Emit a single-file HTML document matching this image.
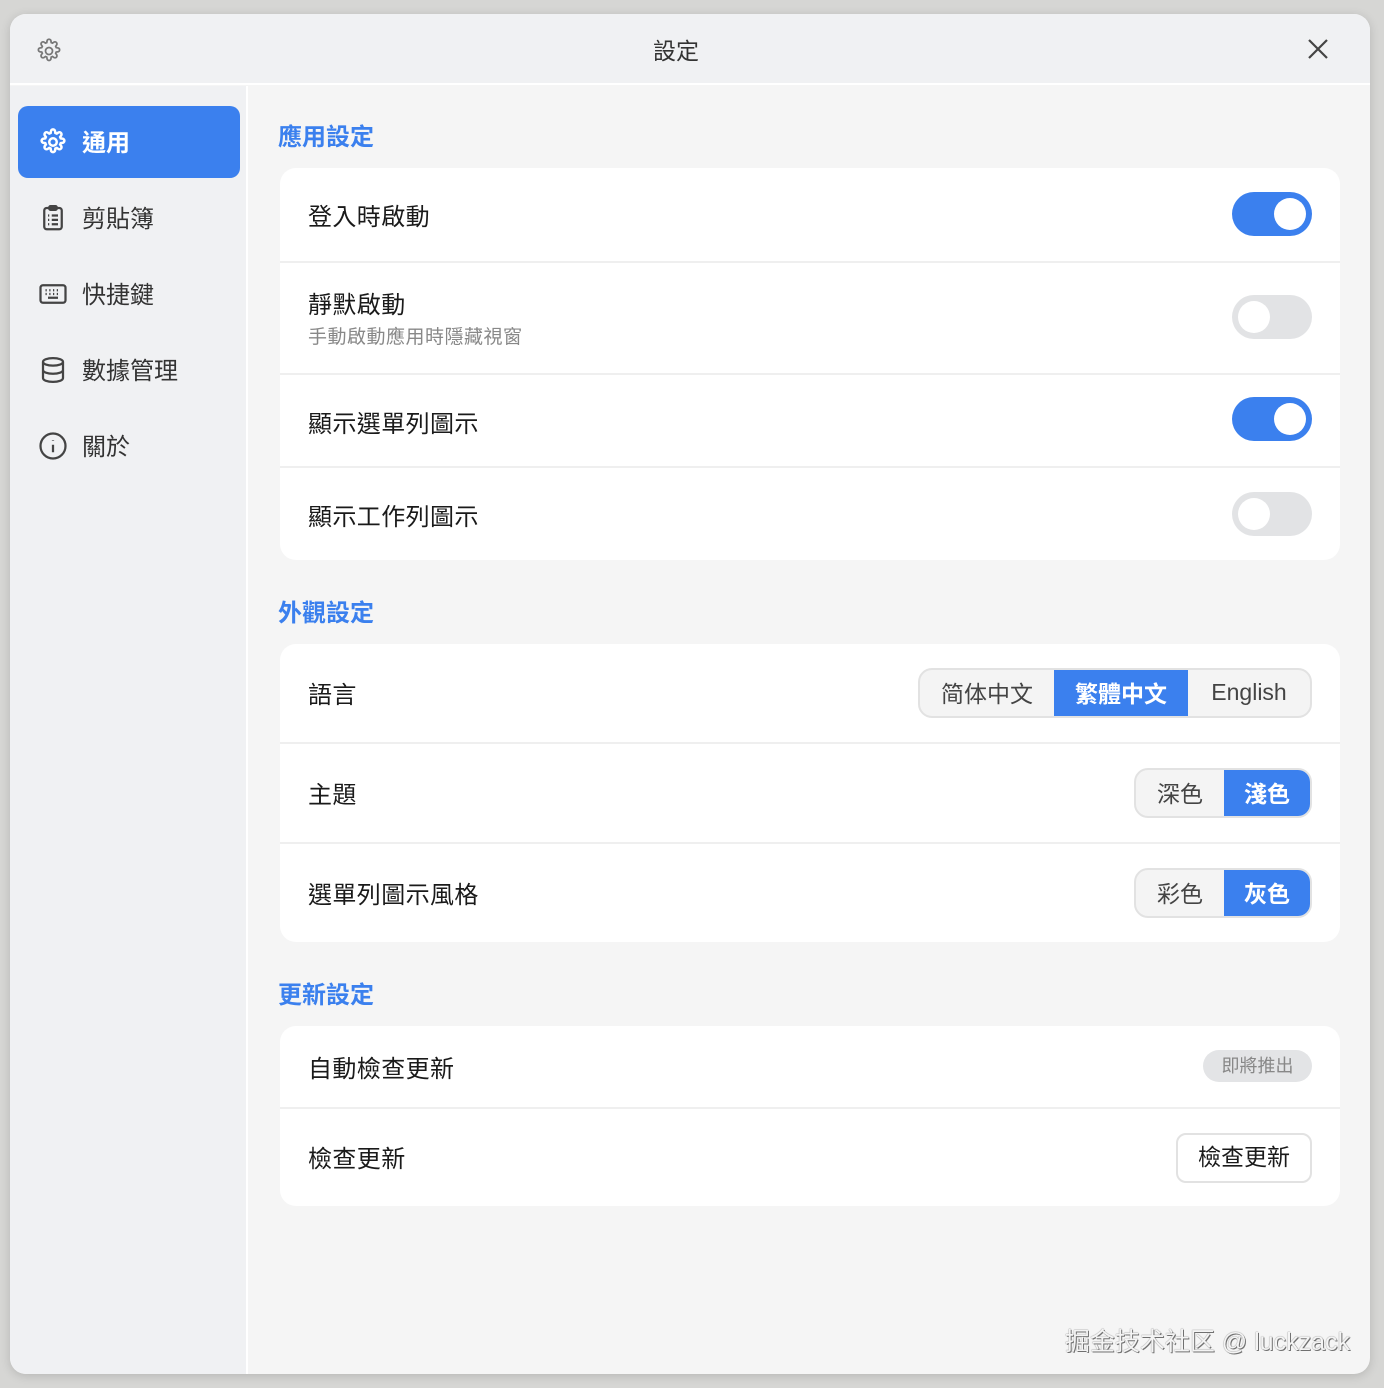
<!DOCTYPE html>
<html><head><meta charset="utf-8"><style>
*{box-sizing:border-box;margin:0;padding:0}
body{width:1384px;height:1388px;background:#d6d6d4;font-family:"Liberation Sans","Noto Sans CJK TC",sans-serif;position:relative;overflow:hidden}
.win{position:absolute;left:10px;top:14px;width:1360px;height:1360px;border-radius:16px;background:#f5f5f5;overflow:hidden;box-shadow:0 2px 10px rgba(0,0,0,.15)}
.title{position:absolute;left:0;top:0;width:1360px;height:71px;background:#f0f1f3;border-bottom:2px solid #fff}
.title .t{position:absolute;left:0;width:1332px;top:18px;text-align:center;font-size:23px;color:#333}
.side{position:absolute;left:0;top:72px;width:238px;bottom:0;background:#f0f1f3;border-right:2px solid #fff}
.item{position:absolute;left:8px;width:222px;height:72px;border-radius:10px;font-size:24px;color:#333;display:flex;align-items:center;padding-left:20px;padding-bottom:3px}
.item svg{margin-right:14px;margin-top:3px}
.item.act{background:#3b80ee;color:#fff;font-weight:bold}
.h{position:absolute;left:268px;font-size:24px;font-weight:bold;color:#3b80ee}
.card{position:absolute;left:270px;width:1060px;background:#fff;border-radius:16px}
.row{position:absolute;left:0;width:1060px;border-top:2px solid #efefef}
.row .l{position:absolute;left:28px;font-size:24px;color:#1a1a1a;letter-spacing:.4px}
.sub{position:absolute;left:28px;font-size:19px;color:#888;letter-spacing:.5px}
.tg{position:absolute;right:28px;width:80px;height:44px;border-radius:22px;background:#3b80ee}
.tg i{position:absolute;top:6px;right:6px;width:32px;height:32px;border-radius:50%;background:#fff}
.tg.off{background:#e2e3e5}.tg.off i{right:auto;left:6px}
.seg{position:absolute;right:28px;height:50px;border:2px solid #e2e2e2;border-radius:14px;background:#f4f4f4;display:flex;overflow:hidden}
.seg span{display:flex;align-items:center;justify-content:center;font-size:23px;color:#444;padding-bottom:2px}
.seg span.on{background:#3b80ee;color:#fff;font-weight:bold}
</style></head><body>
<div class="win">
 <div class="title">
  <svg style="position:absolute;left:25px;top:23px" width="28" height="28" viewBox="0 0 24 24" fill="none" stroke="#777" stroke-width="1.5"><path d="M10.3 3.6a1.7 1.7 0 0 1 3.4 0l.2 1.2 1.1.5 1-.7a1.7 1.7 0 0 1 2.4 2.4l-.7 1 .5 1.1 1.2.2a1.7 1.7 0 0 1 0 3.4l-1.2.2-.5 1.1.7 1a1.7 1.7 0 0 1-2.4 2.4l-1-.7-1.1.5-.2 1.2a1.7 1.7 0 0 1-3.4 0l-.2-1.2-1.1-.5-1 .7a1.7 1.7 0 0 1-2.4-2.4l.7-1-.5-1.1-1.2-.2a1.7 1.7 0 0 1 0-3.4l1.2-.2.5-1.1-.7-1a1.7 1.7 0 0 1 2.4-2.4l1 .7 1.1-.5z"/><circle cx="12" cy="12" r="3"/></svg>
  <div class="t">設定</div>
  <svg style="position:absolute;left:1297px;top:24px" width="22" height="22" viewBox="0 0 22 22" stroke="#444" stroke-width="2.2"><path d="M2 2L20 20M20 2L2 20"/></svg>
 </div>
 <div class="side">
  <div class="item act" style="top:20px"><svg width="30" height="30" viewBox="0 0 24 24" fill="none" stroke="#fff" stroke-width="2"><path d="M10.3 3.6a1.7 1.7 0 0 1 3.4 0l.2 1.2 1.1.5 1-.7a1.7 1.7 0 0 1 2.4 2.4l-.7 1 .5 1.1 1.2.2a1.7 1.7 0 0 1 0 3.4l-1.2.2-.5 1.1.7 1a1.7 1.7 0 0 1-2.4 2.4l-1-.7-1.1.5-.2 1.2a1.7 1.7 0 0 1-3.4 0l-.2-1.2-1.1-.5-1 .7a1.7 1.7 0 0 1-2.4-2.4l.7-1-.5-1.1-1.2-.2a1.7 1.7 0 0 1 0-3.4l1.2-.2.5-1.1-.7-1a1.7 1.7 0 0 1 2.4-2.4l1 .7 1.1-.5z"/><circle cx="12" cy="12" r="3"/></svg>通用</div>
  <div class="item" style="top:96px"><svg width="30" height="30" viewBox="0 0 24 24" fill="none" stroke="#444" stroke-width="1.8"><rect x="5" y="4" width="14" height="17" rx="2"/><rect x="9" y="2.5" width="6" height="3" rx="1"/><path d="M8 10h1M11 10h5M8 13.5h1M11 13.5h5M8 17h1M11 17h5"/></svg>剪貼簿</div>
  <div class="item" style="top:172px"><svg width="30" height="30" viewBox="0 0 24 24" fill="none" stroke="#444" stroke-width="1.8"><rect x="2" y="5" width="20" height="14" rx="2"/><path d="M6 9h1M9 9h1M12 9h1M15 9h1M18 9h0M6 12h1M9 12h1M12 12h1M15 12h1M8 15h8"/></svg>快捷鍵</div>
  <div class="item" style="top:248px"><svg width="30" height="30" viewBox="0 0 24 24" fill="none" stroke="#444" stroke-width="1.8"><ellipse cx="12" cy="5.5" rx="8" ry="3"/><path d="M4 5.5v13c0 1.7 3.6 3 8 3s8-1.3 8-3v-13M4 12c0 1.7 3.6 3 8 3s8-1.3 8-3"/></svg>數據管理</div>
  <div class="item" style="top:324px"><svg width="30" height="30" viewBox="0 0 24 24" fill="none" stroke="#444" stroke-width="1.8"><circle cx="12" cy="12" r="10"/><path d="M12 11v6M12 7.5v.5"/></svg>關於</div>
 </div>

 <div class="h" style="top:103px">應用設定</div>
 <div class="card" style="top:154px;height:392px">
  <div class="row" style="top:0;height:94px;border:0"><div class="l" style="top:29px">登入時啟動</div><div class="tg" style="top:24px"><i></i></div></div>
  <div class="row" style="top:93px;height:112px"><div class="l" style="top:22px">靜默啟動</div><div class="sub" style="top:59px">手動啟動應用時隱藏視窗</div><div class="tg off" style="top:32px"><i></i></div></div>
  <div class="row" style="top:205px;height:93px"><div class="l" style="top:29px">顯示選單列圖示</div><div class="tg" style="top:22px"><i></i></div></div>
  <div class="row" style="top:298px;height:94px"><div class="l" style="top:29px">顯示工作列圖示</div><div class="tg off" style="top:24px"><i></i></div></div>
 </div>

 <div class="h" style="top:579px">外觀設定</div>
 <div class="card" style="top:630px;height:298px">
  <div class="row" style="top:0;height:99px;border:0"><div class="l" style="top:31px">語言</div><div class="seg" style="top:24px;width:394px"><span style="width:134px">简体中文</span><span class="on" style="width:134px">繁體中文</span><span style="width:122px">English</span></div></div>
  <div class="row" style="top:98px;height:100px"><div class="l" style="top:31px">主題</div><div class="seg" style="top:24px;width:178px"><span style="width:88px">深色</span><span class="on" style="width:86px">淺色</span></div></div>
  <div class="row" style="top:198px;height:100px"><div class="l" style="top:31px">選單列圖示風格</div><div class="seg" style="top:24px;width:178px"><span style="width:88px">彩色</span><span class="on" style="width:86px">灰色</span></div></div>
 </div>

 <div class="h" style="top:961px">更新設定</div>
 <div class="card" style="top:1012px;height:180px">
  <div class="row" style="top:0;height:82px;border:0"><div class="l" style="top:23px">自動檢查更新</div><div style="position:absolute;right:28px;top:24px;width:109px;height:32px;border-radius:16px;background:#e3e4e6;color:#888;font-size:18px;text-align:center;line-height:32px">即將推出</div></div>
  <div class="row" style="top:81px;height:99px"><div class="l" style="top:30px">檢查更新</div><div style="position:absolute;right:28px;top:24px;width:136px;height:50px;border:2px solid #e2e2e2;border-radius:10px;font-size:23px;color:#1a1a1a;text-align:center;line-height:44px">檢查更新</div></div>
 </div>

 <div style="position:absolute;right:20px;top:1308px;font-size:25px;color:#f4f4f4;text-shadow:0 0 1px #555,1px 1px 0 #777">掘金技术社区 @ luckzack</div>
</div>
</body></html>
